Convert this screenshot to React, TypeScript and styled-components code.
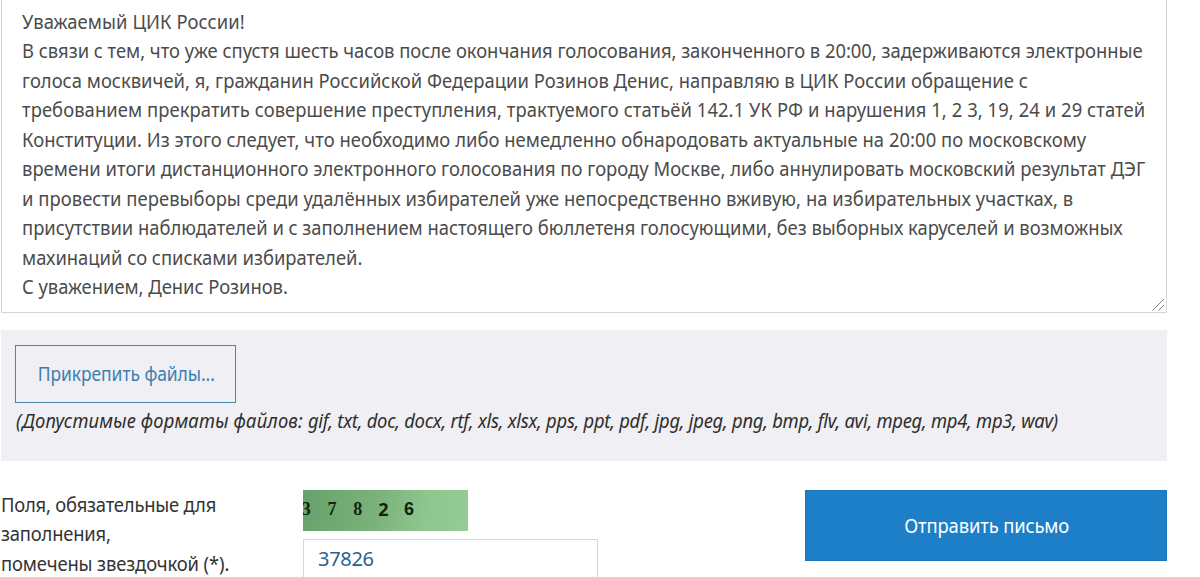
import React from 'react';
import styled, { createGlobalStyle } from 'styled-components';

const GlobalStyle = createGlobalStyle`
  * {
    box-sizing: border-box;
  }

  body {
    margin: 0;
    background: #fff;
    overflow: hidden;
    font-family: 'Noto Sans', 'Open Sans', sans-serif;
  }
`;

// Horizontal squeeze that gives the text its narrow look
const NARROW = 0.92;

interface TextLine {
  text: string;
  spacing: number;
}

const MESSAGE: TextLine[] = [
  { text: 'Уважаемый ЦИК России!', spacing: 0.08 },
  { text: 'В связи с тем, что уже спустя шесть часов после окончания голосования, законченного в 20:00, задерживаются электронные', spacing: -0.025 },
  { text: 'голоса москвичей, я, гражданин Российской Федерации Розинов Денис, направляю в ЦИК России обращение с', spacing: 0.017 },
  { text: 'требованием прекратить совершение преступления, трактуемого статьёй 142.1 УК РФ и нарушения 1, 2 3, 19, 24 и 29 статей', spacing: 0.079 },
  { text: 'Конституции. Из этого следует, что необходимо либо немедленно обнародовать актуальные на 20:00 по московскому', spacing: 0.049 },
  { text: 'времени итоги дистанционного электронного голосования по городу Москве, либо аннулировать московский результат ДЭГ', spacing: 0.015 },
  { text: 'и провести перевыборы среди удалённых избирателей уже непосредственно вживую, на избирательных участках, в', spacing: 0.053 },
  { text: 'присутствии наблюдателей и с заполнением настоящего бюллетеня голосующими, без выборных каруселей и возможных', spacing: -0.023 },
  { text: 'махинаций со списками избирателей.', spacing: 0 },
  { text: 'С уважением, Денис Розинов.', spacing: -0.03 },
];

const HINT: TextLine[] = [
  { text: 'Поля, обязательные для', spacing: -0.22 },
  { text: 'заполнения,', spacing: -0.2 },
  { text: 'помечены звездочкой (*).', spacing: -0.13 },
];

const CAPTCHA = [
  { digit: '3', family: 'Liberation Serif' },
  { digit: '7', family: 'Liberation Serif' },
  { digit: '8', family: 'Liberation Serif' },
  { digit: '2', family: 'Noto Sans' },
  { digit: '6', family: 'Liberation Sans' },
];

const Page = styled.main`
  display: flex;
  flex-direction: column;
  width: 1166px;
  height: 577px;
  margin-left: 1px;
  overflow: hidden;
`;

const MessageBox = styled.section`
  position: relative;
  flex: none;
  height: 313px;
  padding: 7px 20px 0;
  border: 1px solid #cfd6d9;
  border-top: 0;
  color: #4b4b4b;
`;

const Line = styled.p<{ $spacing: number }>`
  margin: 0;
  font-size: 20px;
  line-height: 29.45px;
  letter-spacing: ${props => props.$spacing}px;
  white-space: nowrap;
  transform: scaleX(${NARROW});
  transform-origin: left;
`;

const ResizeGrip = styled.svg`
  position: absolute;
  right: 1px;
  bottom: 1px;
`;

const Attachments = styled.section`
  flex: none;
  height: 131px;
  margin-top: 17px;
  padding: 15px 14px 0;
  background: #f0eff3;
`;

const AttachButton = styled.button`
  display: flex;
  align-items: center;
  justify-content: center;
  width: 221px;
  height: 58px;
  padding: 0 0 0 2px;
  border: 1px solid #4b86ad;
  background: transparent;
  color: #3d7eb0;
  font-family: inherit;
  font-size: 19px;
  letter-spacing: -0.08px;
`;

const ButtonLabel = styled.span`
  flex: none;
  white-space: nowrap;
  transform: scaleX(${NARROW});
`;

const Formats = styled.p`
  margin: 3px 0 0 1px;
  color: #2e2e2e;
  font-size: 20px;
  font-style: italic;
  line-height: 30px;
  letter-spacing: 0.18px;
  white-space: nowrap;
  transform: scaleX(${NARROW});
  transform-origin: left;
`;

const Extensions = styled.span`
  letter-spacing: -0.28px;
`;

const Footer = styled.section`
  display: grid;
  grid-template-columns: 302px 295px 1fr;
  margin-top: 29px;
`;

const Hint = styled.div`
  color: #333;
`;

const CaptchaImage = styled.div`
  display: flex;
  width: 165px;
  height: 41px;
  padding-top: 7px;
  overflow: hidden;
  background: linear-gradient(100deg, #68a16b 0%, #7bb27b 45%, #8fc78f 75%, #95cb95 100%);
`;

const Digit = styled.span<{ $family: string }>`
  flex: none;
  width: 25.7px;
  color: #10240f;
  font-family: '${props => props.$family}', sans-serif;
  font-size: 18px;
  font-weight: 700;
  line-height: 24px;
  text-align: center;

  &:first-child {
    margin-left: -9.5px;
  }
`;

const CaptchaInput = styled.input`
  display: block;
  width: 295px;
  height: 50px;
  margin-top: 8px;
  padding: 0 14px 11px;
  border: 1px solid #d3d9de;
  outline: none;
  color: #2c628f;
  font-family: 'Noto Sans', sans-serif;
  font-size: 20px;
  letter-spacing: -0.3px;
`;

const SubmitButton = styled.button`
  display: flex;
  align-items: center;
  justify-content: center;
  justify-self: end;
  width: 362px;
  height: 71px;
  padding: 0 0 0 1px;
  border: 1px solid #1b76bb;
  background: #1c7fc8;
  color: #fff;
  font-family: inherit;
  font-size: 20px;
  letter-spacing: -0.14px;
`;

const App: React.FC = () => (
  <>
    <GlobalStyle />
    <Page>
      <MessageBox>
        {MESSAGE.map(line => (
          <Line key={line.text} $spacing={line.spacing}>{line.text}</Line>
        ))}
        <ResizeGrip width={13} height={13} viewBox="0 0 13 13" fill="none" stroke="#7d7d7d">
          <path d="M0.5 12.5L12 1M6.5 12.5L12 7" />
        </ResizeGrip>
      </MessageBox>

      <Attachments>
        <AttachButton type="button">
          <ButtonLabel>Прикрепить файлы...</ButtonLabel>
        </AttachButton>
        <Formats>
          (Допустимые форматы файлов:{' '}
          <Extensions>
            gif, txt, doc, docx, rtf, xls, xlsx, pps, ppt, pdf, jpg, jpeg, png, bmp, flv, avi, mpeg, mp4, mp3, wav)
          </Extensions>
        </Formats>
      </Attachments>

      <Footer>
        <Hint>
          {HINT.map(line => (
            <Line key={line.text} $spacing={line.spacing}>{line.text}</Line>
          ))}
        </Hint>
        <div>
          <CaptchaImage>
            {CAPTCHA.map(item => (
              <Digit key={item.digit} $family={item.family}>{item.digit}</Digit>
            ))}
          </CaptchaImage>
          <CaptchaInput defaultValue="37826" />
        </div>
        <SubmitButton type="button">
          <ButtonLabel>Отправить письмо</ButtonLabel>
        </SubmitButton>
      </Footer>
    </Page>
  </>
);

export default App;
